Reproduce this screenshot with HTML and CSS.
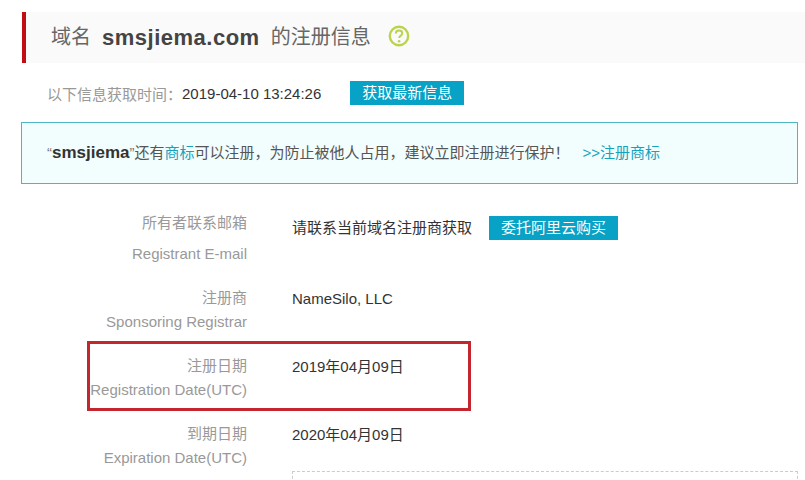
FILE: index.html
```html
<!DOCTYPE html>
<html lang="zh-CN">
<head>
<meta charset="utf-8">
<title>域名 smsjiema.com 的注册信息</title>
<link rel="stylesheet" href="styles.css">
</head>
<body>
<main class="page">
  <header class="title-bar">
    <h1 class="title"><span>域名</span><strong class="domain">smsjiema.com</strong><span>的注册信息</span></h1>
    <svg class="help" width="22" height="22" viewBox="0 0 22 22" aria-hidden="true">
      <circle cx="11" cy="11" r="9.2" fill="none" stroke="#b9d44a" stroke-width="2.4"/>
      <path d="M7.8 8.6c0-2 1.4-3.2 3.3-3.2s3.2 1.1 3.2 2.8c0 1.400-.9 2-1.800 2.700-.8.6-1.300 1.100-1.300 2.200" fill="none" stroke="#b9d44a" stroke-width="2"/>
      <circle cx="11.100" cy="16.300" r="1.300" fill="#b9d44a"/>
    </svg>
  </header>

  <div class="meta">
    <span class="meta-label">以下信息获取时间：</span><span class="meta-time">2019-04-10 13:24:26</span>
    <a class="btn btn-refresh">获取最新信息</a>
  </div>

  <div class="notice">
    <span class="quote">“</span><strong class="notice-name">smsjiema</strong><span class="quote">”</span>还有<a class="link">商标</a>可以注册，为防止被他人占用，建议立即注册进行保护！<a class="link notice-action">&gt;&gt;注册商标</a>
  </div>

  <section class="rows">
    <div class="row row-first">
      <div class="label"><div>所有者联系邮箱</div><div class="label-en">Registrant E-mail</div></div>
      <div class="value value-action"><span>请联系当前域名注册商获取</span><a class="btn btn-buy">委托阿里云购买</a></div>
    </div>
    <div class="row">
      <div class="label"><div>注册商</div><div>Sponsoring Registrar</div></div>
      <div class="value">NameSilo, LLC</div>
    </div>
    <div class="row">
      <div class="label"><div>注册日期</div><div>Registration Date(UTC)</div></div>
      <div class="value">2019年04月09日</div>
    </div>
    <div class="row">
      <div class="label"><div>到期日期</div><div>Expiration Date(UTC)</div></div>
      <div class="value">2020年04月09日</div>
    </div>
    <div class="dashed-box"></div>
    <div class="highlight"></div>
  </section>
</main>
</body>
</html>
```

FILE: styles.css
```css
html, body {
  margin: 0;
  padding: 0;
  height: 480px;
  overflow: hidden;
  background: #fff;
}

body {
  font-family: "Liberation Sans", "Noto Sans CJK SC", sans-serif;
  font-size: 15px;
  color: #333;
}

.page {
  padding: 12px 7px 0 22px;
}

.title-bar {
  display: flex;
  align-items: center;
  height: 51px;
  margin-right: -7px;
  padding-left: 25px;
  border-left: 4px solid #c10d14;
  background: #fafafa;
}

.title {
  display: flex;
  margin: 0;
  font-size: 20px;
  line-height: 51px;
  font-weight: 400;
  color: #666;
}

.domain {
  margin: 0 11px;
  font-size: 22px;
  letter-spacing: .5px;
  font-weight: 700;
  color: #444;
}

.help {
  margin: -4px 0 0 17px;
}

.meta {
  display: flex;
  align-items: center;
  height: 24px;
  margin-top: 18px;
  padding-left: 25px;
}

.meta-label {
  color: #999;
}

.meta-time {
  color: #333;
}

.btn {
  display: block;
  height: 24px;
  line-height: 23px;
  text-align: center;
  color: #fff;
  background: #07a2c6;
}

.btn-refresh {
  width: 114px;
  margin-left: 29px;
}

.notice {
  box-sizing: border-box;
  height: 62px;
  margin: 17px 0 0 -1px;
  padding-left: 25px;
  line-height: 60px;
  border: 1px solid #4db5c4;
  background: #f2fdfe;
  color: #555;
}

.quote {
  color: #777;
}

.notice-name {
  font-size: 17px;
  color: #333;
}

.link {
  color: #14a3bd;
}

.notice-action {
  margin-left: 13px;
}

.rows {
  position: relative;
  margin-top: 27px;
}

.row {
  display: grid;
  grid-template-columns: 225px 1fr;
  column-gap: 45px;
  height: 68px;
  line-height: 24px;
}

.row-first {
  height: 75px;
}

.label {
  text-align: right;
  color: #999;
}

.label-en {
  margin-top: 7px;
}

.value {
  padding-top: 1px;
}

.value-action {
  display: flex;
  align-items: center;
  gap: 17px;
  height: 24px;
  margin-top: 5px;
  padding-top: 0;
}

.btn-buy {
  width: 129px;
}

.dashed-box {
  height: 30px;
  margin: -19px 0 0 270px;
  border: 1px dashed #ccc;
}

.highlight {
  position: absolute;
  left: 65px;
  top: 130px;
  width: 378px;
  height: 64px;
  border: 3px solid #c3262f;
}
```
